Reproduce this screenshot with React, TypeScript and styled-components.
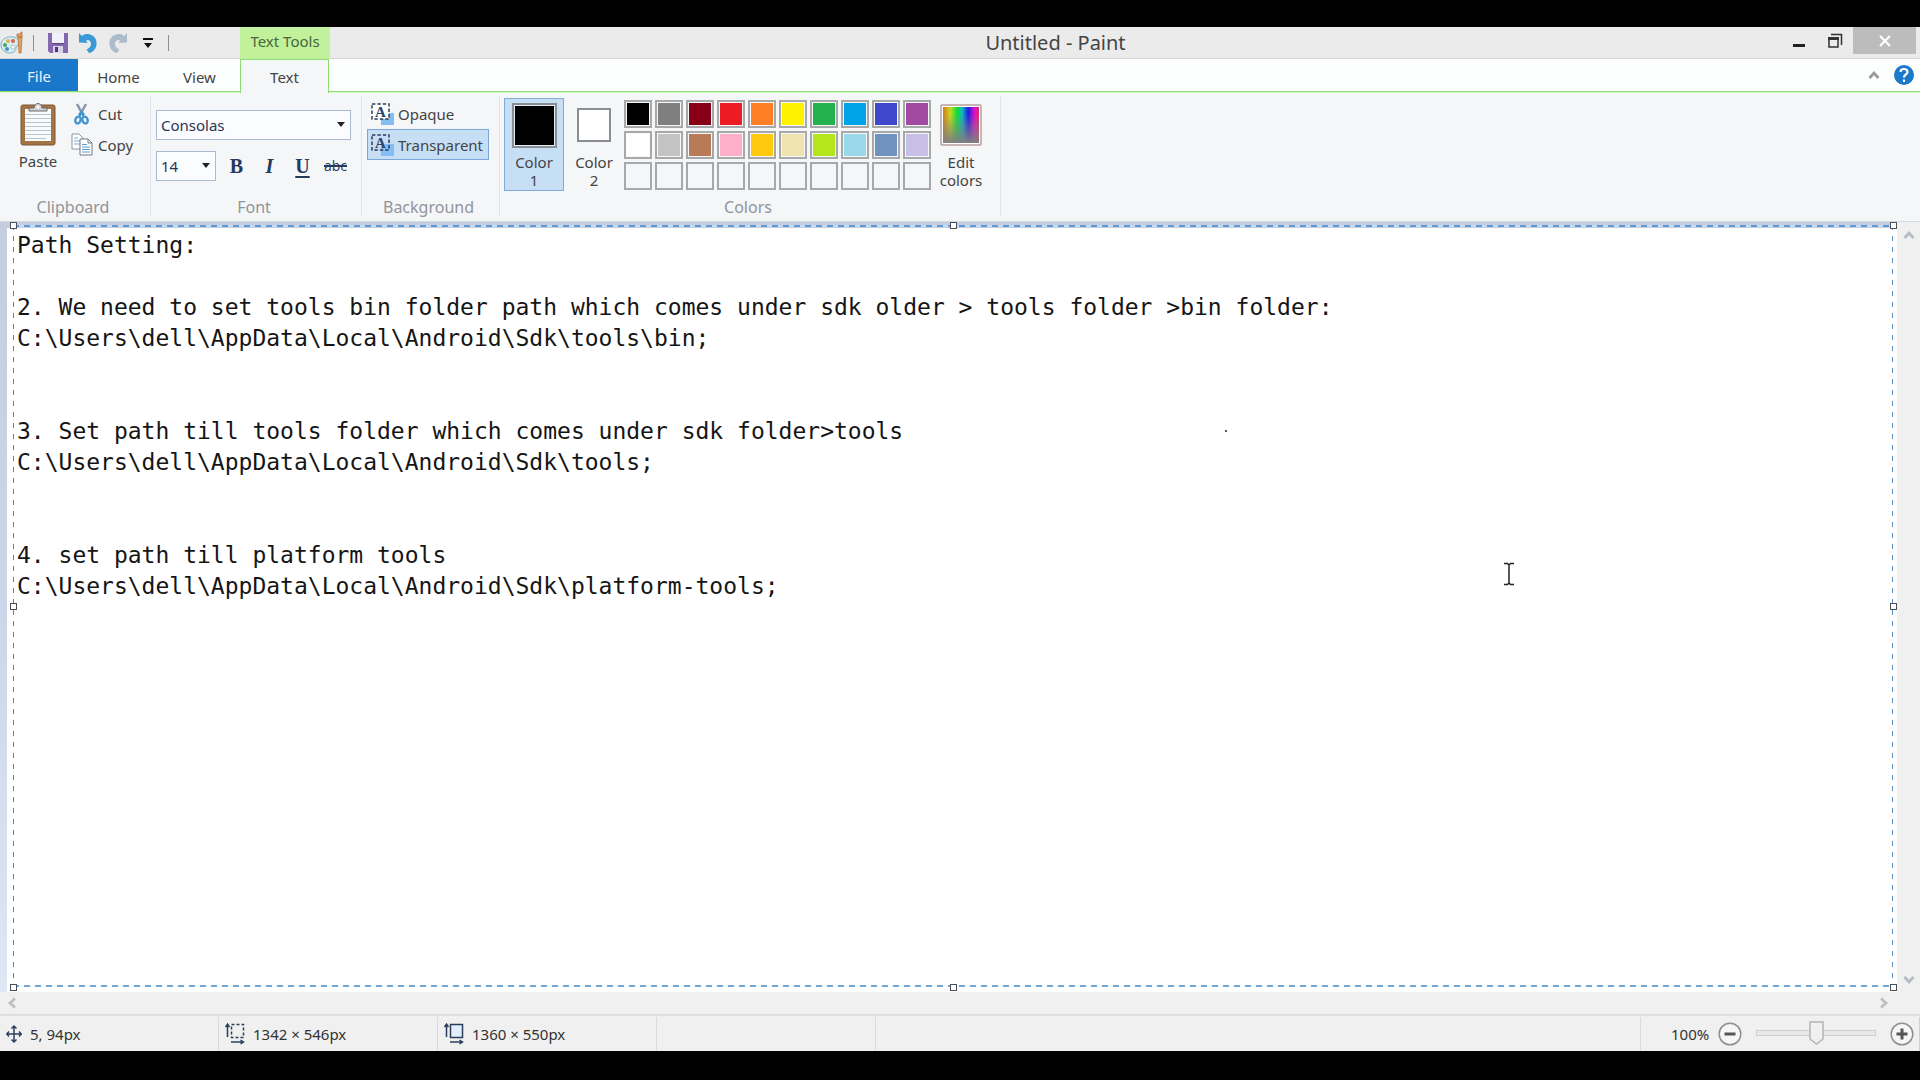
import React from 'react';
import styled, { createGlobalStyle, css } from 'styled-components';

const Global = createGlobalStyle`
  *, *::before, *::after { box-sizing: border-box; }
  html, body { margin: 0; background: #000; }
  body, button, select, textarea, input { font-family: "Noto Sans", "Open Sans", sans-serif; }
  button { margin: 0; padding: 0; border: 0; background: none; color: inherit; }
  svg { display: block; flex: none; }
`;

const Screen = styled.div`
  display: flex;
  flex-direction: column;
  height: 100vh;
  padding: 27px 0 29px;
  background: #000;
  color: #444;
  font-size: 15px;
  line-height: 18px;
`;

/* ---------- title bar ---------- */
const TitleBar = styled.header`
  display: flex;
  height: 32px;
  background: #ebebeb;
  border-bottom: 1px solid #d6d6d8;
`;
const QuickBar = styled.div`
  display: flex;
  align-items: center;
  width: 240px;
  gap: 10px;
`;
const QuickButton = styled.button`
  display: flex;
  align-items: center;
  justify-content: center;
  width: 20px;
  height: 22px;
`;
const QuickSeparator = styled.span`
  width: 1px;
  height: 16px;
  margin-right: 4px;
  background: #8e8e8e;
`;
const ContextTab = styled.div`
  width: 90px;
  height: 32px;
  padding-top: 5px;
  background: #c1f19b;
  color: #47663a;
  text-align: center;
  font-size: 15px;
`;
const Title = styled.h1`
  flex: 1;
  margin: 0;
  color: #444;
  font-size: 20px;
  font-weight: 400;
  line-height: 32px;
  text-align: center;
`;
const WindowButtons = styled.div`
  display: flex;
  width: 139px;
  padding-right: 4px;
`;
const WindowButton = styled.button<{ $close?: boolean }>`
  display: flex;
  align-items: center;
  justify-content: center;
  width: ${p => (p.$close ? 63 : 36)}px;
  height: 27px;
  background: ${p => (p.$close ? '#bcbcbc' : 'transparent')};
`;

/* ---------- tabs ---------- */
const TabRow = styled.nav`
  display: flex;
  height: 34px;
  background: linear-gradient(#8edb74, #8edb74) 0 32px / 100% 1px no-repeat,
    linear-gradient(#dcfbc9, #dcfbc9) 0 33px / 100% 1px no-repeat, #fdfefe;
`;
const Tab = styled.button<{ $kind?: 'file' | 'active' }>`
  width: 81px;
  height: 32px;
  font-size: 15px;
  line-height: 36px;
  color: #444;
  ${p => p.$kind === 'file' && css`
    width: 78px;
    background: #1a77c9;
    color: #eaf4fd;
    line-height: 34px;
  `}
  ${p => p.$kind === 'active' && css`
    width: 89px;
    height: 34px;
    border: 1px solid #8edb74;
    border-bottom: 0;
    background: #f4f6f8;
    line-height: 34px;
  `}
`;
const TabSpacer = styled.div`
  flex: 1;
`;
const TabTools = styled.div`
  display: flex;
  align-items: center;
  gap: 14px;
  height: 32px;
  padding-right: 6px;
`;

/* ---------- ribbon ---------- */
const Ribbon = styled.section`
  display: flex;
  height: 129px;
  padding: 3px 0 5px;
  background: #f4f6f8;
  border-bottom: 1px solid #d5d9e0;
`;
const Group = styled.section<{ $width: number }>`
  display: flex;
  flex-direction: column;
  justify-content: space-between;
  width: ${p => p.$width}px;
  border-right: 1px solid #e1e3e6;
`;
const GroupBody = styled.div<{ $gap?: number; $pad?: number }>`
  display: flex;
  align-items: flex-start;
  gap: ${p => p.$gap ?? 0}px;
  padding-left: ${p => p.$pad ?? 0}px;
`;
const GroupLabel = styled.h2`
  margin: 0;
  padding-right: 4px;
  color: #919498;
  font-size: 16px;
  font-weight: 400;
  line-height: 18px;
  text-align: center;
`;
const Column = styled.div<{ $gap?: number; $top?: number }>`
  display: flex;
  flex-direction: column;
  gap: ${p => p.$gap ?? 0}px;
  padding-top: ${p => p.$top ?? 0}px;
`;
const PasteButton = styled.button`
  display: flex;
  flex-direction: column;
  align-items: center;
  gap: 6px;
  width: 38px;
  padding-top: 7px;
  font-size: 15px;
  line-height: 18px;
`;
const ToolButton = styled.button<{ $active?: boolean; $wide?: boolean }>`
  display: flex;
  align-items: center;
  gap: 4px;
  height: 31px;
  width: ${p => (p.$wide ? '122px' : 'auto')};
  padding-left: ${p => (p.$wide ? 3 : 0)}px;
  border: 1px solid ${p => (p.$active ? '#7ba7d8' : 'transparent')};
  background: ${p => (p.$active ? '#c7dff5' : 'transparent')};
  font-size: 15px;
  line-height: 18px;
`;
const FontRow = styled.div`
  display: flex;
  align-items: center;
  gap: 8px;
`;
const Combo = styled.label<{ $width: number }>`
  position: relative;
  display: block;
  width: ${p => p.$width}px;
  height: 30px;
  svg { position: absolute; right: 6px; top: 12px; pointer-events: none; }
`;
const ComboSelect = styled.select`
  appearance: none;
  width: 100%;
  height: 100%;
  padding: 0 4px;
  border: 1px solid #abbad2;
  border-radius: 0;
  background: #fafcff;
  color: #2b3352;
  font-size: 15px;
`;
const StyleButton = styled.button<{ $look: 'bold' | 'italic' | 'under' | 'strike' }>`
  width: 25px;
  height: 26px;
  color: #24395c;
  font-family: "Liberation Serif", serif;
  font-size: 20px;
  font-weight: 700;
  line-height: 24px;
  ${p => p.$look === 'italic' && css`font-style: italic;`}
  ${p => p.$look === 'under' && css`text-decoration: underline 2px; text-underline-offset: 3px;`}
  ${p => p.$look === 'strike' && css`
    font-family: "Open Sans", sans-serif;
    font-size: 14px;
    font-weight: 400;
    text-decoration: line-through 2px;
  `}
`;
const ColorButton = styled.button<{ $active?: boolean }>`
  display: flex;
  flex-direction: column;
  align-items: center;
  justify-content: space-between;
  width: 60px;
  height: 93px;
  padding: 3px 7px 1px;
  border: 1px solid ${p => (p.$active ? '#7fabd6' : 'transparent')};
  background: ${p => (p.$active ? '#c7dff5' : 'transparent')};
  font-size: 15px;
  line-height: 18px;
`;
const SwatchBox = styled.span`
  display: flex;
  align-items: center;
  justify-content: center;
  height: 46px;
`;
const BigSwatch = styled.span<{ $color: string; $size: number }>`
  width: ${p => p.$size}px;
  height: ${p => p.$size}px;
  border: 2px solid #8a8d91;
  background: ${p => p.$color};
  box-shadow: inset 0 0 0 ${p => (p.$size > 40 ? 1 : 0)}px #e3edf7;
`;
const Palette = styled.div`
  display: grid;
  grid-template-columns: repeat(10, 28px);
  grid-auto-rows: 28px;
  gap: 3px;
  padding: 4px 0 0;
`;
const Cell = styled.button<{ $color?: string }>`
  border: 2px solid #a7a8aa;
  background: ${p => p.$color ?? '#f4f6f8'};
  ${p => p.$color && css`box-shadow: inset 0 0 0 1px #f8f8f8;`}
`;

/* ---------- work area ---------- */
const Work = styled.main`
  display: grid;
  flex: 1;
  min-height: 0;
  grid-template-columns: 1fr 23px;
  grid-template-rows: 1fr 22px;
  background: #f0f0f0;
`;
const Desk = styled.div`
  position: relative;
  padding: 6px 0 0 7px;
  background: linear-gradient(#c5cde0, #ccd6e9 50%, #dfe6f4);
`;
const Canvas = styled.div`
  height: 100%;
  padding: 2px 5px 5px 10px;
  background: #fff;
`;
const TextArea = styled.textarea`
  display: block;
  width: 100%;
  height: 100%;
  padding: 0;
  border: 0;
  outline: 0;
  resize: none;
  overflow: hidden;
  background: transparent;
  color: #151515;
  font-family: "DejaVu Sans Mono", monospace;
  font-size: 23px;
  line-height: 31px;
`;
const Frame = styled.div`
  position: absolute;
  inset: 3px 4px 5px 13px;
  pointer-events: none;
  background:
    repeating-linear-gradient(90deg, #6198d4 0 6px, #c3e0fb 6px 11px) 0 0 / 100% 2px no-repeat,
    repeating-linear-gradient(90deg, #74a5d3 0 6px, #f0fbff 6px 11px) 0 100% / 100% 2px no-repeat,
    repeating-linear-gradient(#66819f 0 5px, transparent 5px 11px) 0 0 / 1px 100% no-repeat,
    repeating-linear-gradient(#5b90c9 0 5px, transparent 5px 11px) 100% 0 / 1px 100% no-repeat;
`;
const Handle = styled.span<{ $x: number; $y: number }>`
  position: absolute;
  left: ${p => p.$x}%;
  top: ${p => p.$y}%;
  width: 7px;
  height: 7px;
  margin: -3px;
  border: 1px solid #4b4f58;
  background: #fff;
`;
const Dot = styled.span`
  position: absolute;
  left: 1225px;
  top: 208px;
  width: 2px;
  height: 2px;
  background: #555;
`;
const Pointer = styled.svg`
  position: absolute;
  left: 1503px;
  top: 340px;
`;
const ScrollTrack = styled.div<{ $across?: boolean }>`
  display: flex;
  flex-direction: ${p => (p.$across ? 'row' : 'column')};
  align-items: center;
  justify-content: space-between;
  padding: ${p => (p.$across ? '0 6px 0 5px' : '6px 0 5px')};
`;
const ScrollButton = styled.button`
  display: flex;
  align-items: center;
  justify-content: center;
  width: 14px;
  height: 14px;
`;

/* ---------- status bar ---------- */
const StatusBar = styled.footer`
  display: flex;
  height: 37px;
  padding-top: 1px;
  border-top: 2px solid #dddee0;
  background: #f0f0f0;
  color: #333;
  font-size: 15px;
  line-height: 34px;
`;
const StatusCell = styled.div<{ $grow?: boolean }>`
  display: flex;
  align-items: center;
  gap: 8px;
  width: 219px;
  padding-left: 6px;
  border-right: 1px solid #d9dadc;
  ${p => p.$grow && css`flex: 1; width: auto;`}
`;
const Zoom = styled.div`
  display: flex;
  align-items: center;
  width: 279px;
  padding: 0 5px 0 30px;
  justify-content: space-between;
  border-right: 1px solid #d0d0d0;
`;
const ZoomLevel = styled.div`
  display: flex;
  align-items: center;
  gap: 9px;
`;
const ZoomButton = styled.button`
  display: flex;
`;
const thumb = encodeURIComponent(
  '<svg xmlns="http://www.w3.org/2000/svg" width="15" height="24"><path d="M1 1h13v17l-6.500 5L1 18z" fill="#f0f0f0" stroke="#b4b4b4" stroke-width="1.500"/></svg>'
);
const Slider = styled.input`
  appearance: none;
  width: 120px;
  height: 24px;
  margin: 0 0 2px;
  background: none;
  &::-webkit-slider-runnable-track {
    height: 6px;
    border: 1px solid #cfcfcf;
    background: #e8e8e8;
  }
  &::-webkit-slider-thumb {
    appearance: none;
    width: 15px;
    height: 24px;
    margin-top: -10px;
    background: url("data:image/svg+xml,${thumb}") no-repeat;
  }
`;

/* ---------- drawings ---------- */
const PaintLogo = () => (
  <svg width="23" height="24" viewBox="0 0 23 24">
    <path d="M1 15C0 8 7 5 13 6c6 1 7 6 4 9-2 2 0 3-2 5-4 4-13 2-14-5z" fill="#d7edf3" stroke="#7fb0c4" />
    <circle cx="5" cy="14" r="2" fill="#4aa564" /><circle cx="8" cy="10" r="2" fill="#e6b34b" />
    <circle cx="13" cy="10" r="2" fill="#d5654e" /><circle cx="7" cy="18" r="2" fill="#4a90c9" />
    <circle cx="13" cy="16" r="2" fill="#fff" stroke="#89a" strokeWidth=".6" />
    <path d="M17 3h4V1h1v5h-5zM18 6h4l-1 16h-2z" fill="#e0a268" stroke="#b87439" strokeWidth=".8" />
  </svg>
);
const SaveIcon = () => (
  <svg width="20" height="21" viewBox="0 0 20 21">
    <path d="M0 1h20v20H2l-2-2z" fill="#8468ae" />
    <path d="M4 1h12v10H4z" fill="#f1eff8" /><path d="M4 11h12v1H4z" fill="#5a437f" />
    <path d="M5 14h10v7H5z" fill="#d9d2e8" /><path d="M7 15h3v5H7z" fill="#4c3a70" />
  </svg>
);
const UndoIcon = ({ color, flip }: { color: string; flip?: boolean }) => (
  <svg width="20" height="22" viewBox="0 0 20 22">
    <g transform={flip ? 'translate(20 0) scale(-1 1)' : undefined}>
      <path d="M1 1l3 3c2-2 5-2.500 8-1.500 5 1.500 7 5.500 6.500 10-.500 4.500-3.500 8-7.500 8.500l-2.500-3.500c2.500-1 4.500-3 4.500-5.500 0-2-1-3.500-3-4L8 8.500l1.500 2.500L1 10.500z" fill={color} />
    </g>
  </svg>
);
const Clipboard = () => (
  <svg width="36" height="43" viewBox="0 0 36 43">
    <rect x="1" y="2" width="34" height="40" rx="2" fill="#a37545" stroke="#7d5730" />
    <path d="M5 6h26v32H5z" fill="#f8fafc" />
    <path d="M5 11.500h26M5 15.500h26M5 19.500h26M5 23.500h26M5 27.500h26M5 31.500h26M5 35.500h21" stroke="#b8c3d0" />
    <path d="M9 8V5h5c0-6 8-6 8 0h5v3z" fill="#d0d2d5" stroke="#696a6c" />
    <circle cx="18" cy="4" r="1.500" fill="#fff" />
  </svg>
);
const Scissors = () => (
  <svg width="23" height="22" viewBox="0 0 23 22">
    <path d="M6 1l6.500 12M15 1L8.500 13" stroke="#8796a8" strokeWidth="2.500" fill="none" />
    <path d="M8 12l2.500-3 2.500 3" stroke="#3f94d1" strokeWidth="2.500" fill="none" />
    <ellipse cx="7" cy="17" rx="2.600" ry="3.500" transform="rotate(20 7 17)" fill="none" stroke="#3f94d1" strokeWidth="2.400" />
    <ellipse cx="14" cy="17" rx="2.600" ry="3.500" transform="rotate(-20 14 17)" fill="none" stroke="#3f94d1" strokeWidth="2.400" />
  </svg>
);
const CopyIcon = () => (
  <svg width="23" height="23" viewBox="0 0 23 23">
    <path d="M1 1h7l4 4v11H1z" fill="#fff" stroke="#8d95a0" />
    <path d="M3 5h4M3 8h6M3 11h6" stroke="#79a9d4" />
    <path d="M9 6h8l4 4v12H9z" fill="#fff" stroke="#737b86" /><path d="M17 6v4h4" fill="none" stroke="#737b86" />
    <path d="M11 11.500h5M11 14h8M11 16.500h8M11 19h8" stroke="#5c99cf" />
  </svg>
);
const BackgroundIcon = ({ clear }: { clear?: boolean }) => (
  <svg width="23" height="22" viewBox="0 0 23 22">
    <path d="M1 1h17v15H1z" fill={clear ? '#c7dff5' : '#fff'} />
    <path d={clear ? 'M10 10h13v12H10z' : 'M18 10h5v12H10v-6h8z'} fill="#85bdf3" />
    <path d="M1 1h17v15H1z" fill="none" stroke="#2b3d57" strokeWidth="1.500" strokeDasharray="3.400 2" />
    <text x="9.500" y="14" textAnchor="middle" fontFamily="Liberation Serif, serif" fontSize="15" fontWeight="700" fill="#2b4568">A</text>
  </svg>
);
const Down = () => (
  <svg width="8" height="5" viewBox="0 0 8 5"><path d="M0 0h8L4 5z" fill="#222" /></svg>
);
const Chevron = ({ turn = 0, color = '#b4bcc4' }: { turn?: number; color?: string }) => (
  <svg width="12" height="12" viewBox="0 0 12 12">
    <path d="M1.500 9L6 4l4.500 5" transform={`rotate(${turn} 6 6)`} fill="none" stroke={color} strokeWidth="2.800" />
  </svg>
);
const Rainbow = () => (
  <svg width="42" height="42" viewBox="0 0 42 42">
    <defs>
      <linearGradient id="hue">
        <stop offset="0" stopColor="#d27a1c" /><stop offset=".2" stopColor="#c8d820" />
        <stop offset=".38" stopColor="#16e030" /><stop offset=".54" stopColor="#12b0c8" />
        <stop offset=".7" stopColor="#1c1ce0" /><stop offset=".88" stopColor="#e010c8" />
        <stop offset="1" stopColor="#e02868" />
      </linearGradient>
      <linearGradient id="fade" x2="0" y2="1">
        <stop offset=".2" stopColor="#808080" stopOpacity="0" /><stop offset="1" stopColor="#808080" />
      </linearGradient>
    </defs>
    <rect x="1" y="1" width="40" height="40" rx="1" fill="#fff" stroke="#b89f9c" strokeWidth="1.500" />
    <path d="M3 3h36v36H3z" fill="url(#hue)" /><path d="M3 3h36v36H3z" fill="url(#fade)" />
  </svg>
);
const MoveIcon = () => (
  <svg width="16" height="20" viewBox="0 0 16 20">
    <path d="M8 2v16M1 10h14M5.500 4.500L8 2l2.500 2.500M5.500 15.500L8 18l2.500-2.500M3 7.500L.700 10 3 12.500M13 7.500l2.300 2.500-2.300 2.500" fill="none" stroke="#2b3f5c" strokeWidth="1.500" />
  </svg>
);
const SizeIcon = ({ dashed }: { dashed?: boolean }) => (
  <svg width="20" height="24" viewBox="0 0 20 24">
    <rect x="6.500" y="2.500" width="12" height="13" fill={dashed ? 'none' : '#e4eefa'} stroke="#2b3f5c" strokeWidth="1.500" strokeDasharray={dashed ? '3 2' : undefined} />
    <path d="M2.500 2v13M.5 5l2-3 2 3M6 20h12M15.500 18l3 2-3 2" fill="none" stroke="#2b3f5c" strokeWidth="1.500" />
  </svg>
);
const ZoomIcon = ({ plus }: { plus?: boolean }) => (
  <svg width="24" height="24" viewBox="0 0 24 24">
    <circle cx="12" cy="12" r="10.800" fill="#f6f6f6" stroke="#8f8f8f" strokeWidth="1.500" />
    <path d={plus ? 'M6.500 12h11M12 6.500v11' : 'M6.500 12h11'} stroke="#555" strokeWidth="3" />
  </svg>
);

const row1 = ['#000000', '#7f7f7f', '#880015', '#ed1c24', '#ff7f27', '#fff200', '#22b14c', '#00a2e8', '#3f48cc', '#a349a4'];
const row2 = ['#ffffff', '#c3c3c3', '#b97a57', '#ffaec9', '#ffc90e', '#efe4b0', '#b5e61d', '#99d9ea', '#7092be', '#c8bfe7'];
const cells: (string | undefined)[] = [...row1, ...row2, ...Array<undefined>(10).fill(undefined)];
const handles = [[0, 0], [50, 0], [100, 0], [0, 50], [100, 50], [0, 100], [50, 100], [100, 100]];

const note = `Path Setting:

2. We need to set tools bin folder path which comes under sdk older > tools folder >bin folder:
C:\\Users\\dell\\AppData\\Local\\Android\\Sdk\\tools\\bin;


3. Set path till tools folder which comes under sdk folder>tools
C:\\Users\\dell\\AppData\\Local\\Android\\Sdk\\tools;


4. set path till platform tools
C:\\Users\\dell\\AppData\\Local\\Android\\Sdk\\platform-tools;`;

export default function App() {
  return (
    <Screen>
      <Global />
      <TitleBar>
        <QuickBar>
          <PaintLogo />
          <QuickSeparator />
          <QuickButton aria-label="Save"><SaveIcon /></QuickButton>
          <QuickButton aria-label="Undo"><UndoIcon color="#3a9ad6" /></QuickButton>
          <QuickButton aria-label="Redo"><UndoIcon color="#adbccd" flip /></QuickButton>
          <QuickButton aria-label="Customize toolbar">
            <svg width="12" height="10" viewBox="0 0 12 10"><path d="M1 0h10v2H1zM2 5h8l-4 5z" fill="#111" /></svg>
          </QuickButton>
          <QuickSeparator />
        </QuickBar>
        <ContextTab>Text Tools</ContextTab>
        <Title>Untitled - Paint</Title>
        <WindowButtons>
          <WindowButton aria-label="Minimize">
            <svg width="12" height="12" viewBox="0 0 12 12"><path d="M0 9h12v3H0z" fill="#222" /></svg>
          </WindowButton>
          <WindowButton aria-label="Restore">
            <svg width="16" height="16" viewBox="0 0 16 16">
              <path d="M4 1.500h10.500V12" fill="none" stroke="#333" strokeWidth="1.500" />
              <path d="M2 5h9v9H2z" fill="none" stroke="#333" strokeWidth="1.500" /><path d="M1 4h11v3H1z" fill="#333" />
            </svg>
          </WindowButton>
          <WindowButton $close aria-label="Close">
            <svg width="12" height="12" viewBox="0 0 12 12"><path d="M1 1l10 10M11 1L1 11" stroke="#fff" strokeWidth="2.200" /></svg>
          </WindowButton>
        </WindowButtons>
      </TitleBar>

      <TabRow>
        <Tab $kind="file">File</Tab>
        <Tab>Home</Tab>
        <Tab>View</Tab>
        <Tab $kind="active">Text</Tab>
        <TabSpacer />
        <TabTools>
          <Chevron color="#9a9a9a" />
          <svg width="20" height="20" viewBox="0 0 20 20">
            <circle cx="10" cy="10" r="10" fill="#1c78c8" />
            <path d="M6.500 7c0-4 7-4 7 0 0 2.500-3.500 2.500-3.500 5.500M10 14.500v2.500" fill="none" stroke="#fff" strokeWidth="2.200" />
          </svg>
        </TabTools>
      </TabRow>

      <Ribbon>
        <Group $width={151}>
          <GroupBody $pad={19} $gap={13}>
            <PasteButton><Clipboard />Paste</PasteButton>
            <Column $top={2}>
              <ToolButton><Scissors />Cut</ToolButton>
              <ToolButton><CopyIcon />Copy</ToolButton>
            </Column>
          </GroupBody>
          <GroupLabel>Clipboard</GroupLabel>
        </Group>
        <Group $width={211}>
          <GroupBody $pad={5}>
            <Column $top={14} $gap={11}>
              <Combo $width={195}>
                <ComboSelect aria-label="Font family"><option>Consolas</option></ComboSelect>
                <Down />
              </Combo>
              <FontRow>
                <Combo $width={60}>
                  <ComboSelect aria-label="Font size"><option>14</option></ComboSelect>
                  <Down />
                </Combo>
                <StyleButton $look="bold">B</StyleButton>
                <StyleButton $look="italic">I</StyleButton>
                <StyleButton $look="under">U</StyleButton>
                <StyleButton $look="strike">abc</StyleButton>
              </FontRow>
            </Column>
          </GroupBody>
          <GroupLabel>Font</GroupLabel>
        </Group>
        <Group $width={138}>
          <GroupBody $pad={5}>
            <Column $top={2}>
              <ToolButton $wide><BackgroundIcon />Opaque</ToolButton>
              <ToolButton $wide $active aria-pressed="true"><BackgroundIcon clear />Transparent</ToolButton>
            </Column>
          </GroupBody>
          <GroupLabel>Background</GroupLabel>
        </Group>
        <Group $width={501}>
          <GroupBody $pad={4}>
            <Column $top={2}>
              <ColorButton $active aria-pressed="true">
                <SwatchBox><BigSwatch $color="#000" $size={45} /></SwatchBox>
                <span>Color<br />1</span>
              </ColorButton>
            </Column>
            <Column $top={2}>
              <ColorButton>
                <SwatchBox><BigSwatch $color="#fff" $size={34} /></SwatchBox>
                <span>Color<br />2</span>
              </ColorButton>
            </Column>
            <Palette>
              {cells.map((c, i) => <Cell key={i} $color={c} aria-label={c ?? 'Empty color'} />)}
            </Palette>
            <Column $top={2}>
              <ColorButton>
                <SwatchBox><Rainbow /></SwatchBox>
                <span>Edit<br />colors</span>
              </ColorButton>
            </Column>
          </GroupBody>
          <GroupLabel>Colors</GroupLabel>
        </Group>
      </Ribbon>

      <Work>
        <Desk>
          <Canvas>
            <TextArea aria-label="Canvas text" spellCheck={false} defaultValue={note} />
          </Canvas>
          <Frame>
            {handles.map(([x, y]) => <Handle key={`${x}-${y}`} $x={x} $y={y} />)}
          </Frame>
          <Dot />
          <Pointer width="12" height="24" viewBox="0 0 12 24">
            <path d="M1 1.500h3.500L6 3l1.500-1.500H11M6 3v18M1 22.500h3.500L6 21l1.500 1.500H11" fill="none" stroke="#222" strokeWidth="1.500" />
          </Pointer>
        </Desk>
        <ScrollTrack>
          <ScrollButton aria-label="Scroll up"><Chevron /></ScrollButton>
          <ScrollButton aria-label="Scroll down"><Chevron turn={180} /></ScrollButton>
        </ScrollTrack>
        <ScrollTrack $across>
          <ScrollButton aria-label="Scroll left"><Chevron turn={-90} color="#bfbfbf" /></ScrollButton>
          <ScrollButton aria-label="Scroll right"><Chevron turn={90} color="#bfbfbf" /></ScrollButton>
        </ScrollTrack>
      </Work>

      <StatusBar>
        <StatusCell><MoveIcon />5, 94px</StatusCell>
        <StatusCell><SizeIcon dashed />1342 × 546px</StatusCell>
        <StatusCell><SizeIcon />1360 × 550px</StatusCell>
        <StatusCell />
        <StatusCell $grow />
        <Zoom>
          <ZoomLevel>
            <span>100%</span>
            <ZoomButton aria-label="Zoom out"><ZoomIcon /></ZoomButton>
          </ZoomLevel>
          <Slider type="range" min={0} max={100} defaultValue={50} aria-label="Zoom" />
          <ZoomButton aria-label="Zoom in"><ZoomIcon plus /></ZoomButton>
        </Zoom>
      </StatusBar>
    </Screen>
  );
}
